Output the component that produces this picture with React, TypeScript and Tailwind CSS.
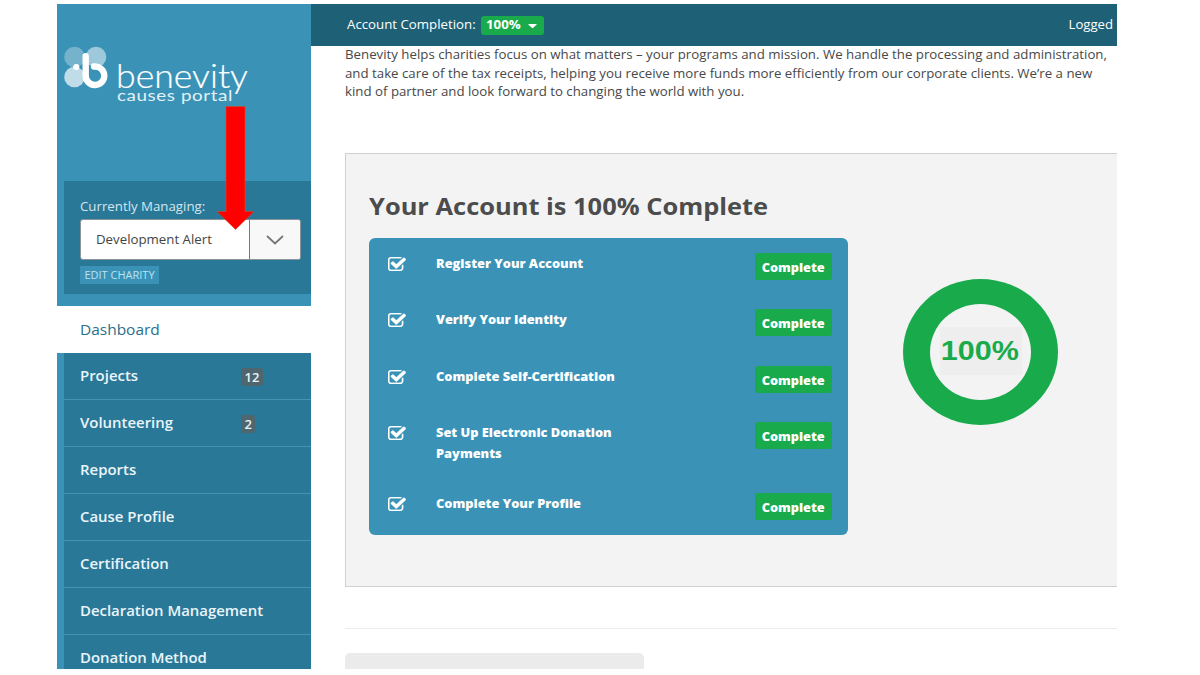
import React from "react";
import { FaCaretDown } from "react-icons/fa";

const navItems = [
  { name: "Projects", count: 12 },
  { name: "Volunteering", count: 2 },
  { name: "Reports" },
  { name: "Cause Profile" },
  { name: "Certification" },
  { name: "Declaration Management" },
  { name: "Donation Method" },
];

const steps = [
  "Register Your Account",
  "Verify Your Identity",
  "Complete Self-Certification",
  "Set Up Electronic Donation Payments",
  "Complete Your Profile",
];

function Logo() {
  return (
    <svg width="190" height="62" viewBox="0 0 190 62" fill="none">
      <circle cx="10.5" cy="13" r="10.3" fill="#fff" fillOpacity="0.3" />
      <circle cx="32" cy="13" r="10.3" fill="#fff" fillOpacity="0.5" />
      <circle cx="10.5" cy="33" r="10.3" fill="#fff" fillOpacity="0.68" />
      <circle cx="12.3" cy="23" r="3.1" fill="#fff" />
      <path
        d="M21.7 12.3V31.7A9.3 9.3 0 1 0 30 22.500"
        stroke="#fff"
        strokeWidth="6.4"
        strokeLinecap="round"
      />
      <text
        x="52"
        y="44"
        fill="#fff"
        stroke="#fff"
        strokeWidth="0.2"
        fontSize="34"
        textLength="132"
        lengthAdjust="spacingAndGlyphs"
        className="font-['Lato'] font-light"
      >
        benevity
      </text>
      <text
        x="53"
        y="57"
        fill="#e3f1f6"
        fontSize="16"
        letterSpacing="0.5"
        textLength="116"
        lengthAdjust="spacingAndGlyphs"
        className="font-['Lato']"
      >
        causes portal
      </text>
    </svg>
  );
}

function CheckIcon() {
  return (
    <svg
      className="mt-[5px] w-[18px] h-[14px] shrink-0"
      viewBox="64 128 1664 1408"
      preserveAspectRatio="none"
      fill="currentColor"
      stroke="currentColor"
      strokeWidth="30"
    >
      <path d="M1472 930v318q0 119-84.500 203.500t-203.500 84.500h-832q-119 0-203.500-84.500t-84.500-203.500v-832q0-119 84.500-203.500t203.500-84.500h832q63 0 117 25 15 7 18 23 3 17-9 29l-49 49q-10 10-23 10-3 0-9-2-23-6-45-6h-832q-66 0-113 47t-47 113v832q0 66 47 113t113 47h832q66 0 113-47t47-113v-254q0-13 9-22l64-64q10-10 23-10 6 0 12 3 20 8 20 29zm231-489l-814 814q-24 24-57 24t-57-24l-430-430q-24-24-24-57t24-57l110-110q24-24 57-24t57 24l263 263 647-647q24-24 57-24t57 24l110 110q24 24 24 57t-24 57z" />
    </svg>
  );
}

function Sidebar() {
  return (
    <aside className="w-[254px] shrink-0 bg-[#3a93b7] flex flex-col">
      <div className="h-[177px] shrink-0 pl-[7px] pt-[40px]">
        <Logo />
      </div>
      <div className="ml-[7px] h-[113px] shrink-0 bg-[#2a7898] pl-4 pt-[15px]">
        <p className="text-[13px] leading-5 text-[#d3e6ee] origin-left scale-x-[1.02]">
          Currently Managing:
        </p>
        <div className="mt-[3px] flex w-[221px] h-[41px] rounded-[3px] border border-[#8a9499] bg-white overflow-hidden">
          <div className="w-[169px] pl-[15px] leading-[38px] text-[13px] text-[#444] border-r border-[#777]">
            <span className="inline-block origin-left scale-x-[1.02]">
              Development Alert
            </span>
          </div>
          <div className="flex-1 bg-[#f8f8f8] flex items-center justify-center">
            <svg width="18" height="10" viewBox="0 0 18 10" fill="none">
              <path d="M1 1l8 7.500L17 1" stroke="#777" strokeWidth="1.8" />
            </svg>
          </div>
        </div>
        <button className="mt-[6px] block w-[79px] h-[18px] bg-[#3a93b7] text-[11px] leading-[18px] text-[#b9e2f2] whitespace-nowrap">
          EDIT CHARITY
        </button>
      </div>
      <div className="h-3 shrink-0" />
      <nav className="text-[15px] text-[#e9f5fa] font-semibold">
        <a className="block h-[47px] bg-white pl-[23px] leading-[46px] font-normal text-[#2a6f8b]">
          <span className="inline-block origin-left scale-x-[1.03]">
            Dashboard
          </span>
        </a>
        {navItems.map((item) => (
          <a
            key={item.name}
            className="ml-[7px] h-[47px] bg-[#2a7898] border-b border-[#4593b0] pl-4 pb-px flex items-center"
          >
            <span className="w-[161px] whitespace-nowrap">
              <span className="inline-block origin-left scale-x-[0.995]">
                {item.name}
              </span>
            </span>
            {item.count && (
              <span className="mt-[3px] rounded-[3px] bg-[#50666f] px-[3.5px] text-[13px] leading-[18px] font-semibold">
                {item.count}
              </span>
            )}
          </a>
        ))}
      </nav>
    </aside>
  );
}

function Header() {
  return (
    <header className="h-[42px] bg-[#1e6177] pl-9 pr-[4px] flex items-center text-[13px] text-white">
      <span className="w-[134px] whitespace-nowrap">
        <span className="inline-block origin-left scale-x-[1.02]">
          Account Completion:
        </span>
      </span>
      <span className="w-[63px] h-[19px] rounded-[3px] bg-[#19ab4b] pl-[5px] pr-[7px] flex items-center justify-between font-bold">
        <span className="origin-left scale-x-[1.02]">100%</span>
        <FaCaretDown className="w-[9px] h-[13px]" preserveAspectRatio="none" />
      </span>
      <span className="ml-auto origin-right scale-x-[1.01]">Logged</span>
    </header>
  );
}

function Steps() {
  return (
    <ul className="mt-[14px] w-[479px] h-[297px] rounded-[6px] bg-[#3a93b7] pt-[14px] text-white text-[13px] font-extrabold">
      {steps.map((step) => (
        <li
          key={step}
          className="flex items-start min-h-[27px] pl-[19px] pr-4 mb-[29.3px]"
        >
          <CheckIcon />
          <p className="ml-[30px] mt-px -mb-px w-[190px] leading-[21px] origin-left scale-x-[0.985]">
            {step}
          </p>
          <span className="ml-auto mt-px -mb-px w-[77px] h-[27px] rounded-[3px] bg-[#19ab4b] text-center leading-[28px]">
            <span className="inline-block scale-x-[0.98]">Complete</span>
          </span>
        </li>
      ))}
    </ul>
  );
}

function Ring() {
  return (
    <div className="ml-[55px] mt-[55px] w-[155px] h-[146px] rounded-[50%] bg-[#19ab4b] flex items-center justify-center">
      <div className="w-[101px] h-[96px] rounded-[50%] bg-[#f3f3f3] flex items-center justify-center">
        <div className="mb-[3px] w-[82px] h-[48px] bg-[#eeeeee] flex items-center justify-center font-['Liberation_Sans'] text-[28px] font-bold text-[#19ab4b]">
          <span className="-ml-px scale-x-[1.09]">100%</span>
        </div>
      </div>
    </div>
  );
}

function App() {
  return (
    <div className="w-[1200px] h-[675px] bg-white pl-[57px] pt-1 overflow-hidden font-['Open_Sans',sans-serif]">
      <div className="relative flex w-[1060px] h-[665px] overflow-hidden">
        <Sidebar />
        <main className="flex-1 min-w-0">
          <Header />
          <div className="pl-[34px]">
            <p className="-mt-px w-[740px] h-[108px] text-[13px] leading-[18.6px] text-[#484848] origin-left scale-x-[1.02] whitespace-nowrap">
              Benevity helps charities focus on what matters – your programs and
              mission. We handle the processing and administration,
              <br />
              and take care of the tax receipts, helping you receive more funds
              more efficiently from our corporate clients. We’re a new
              <br />
              kind of partner and look forward to changing the world with you.
            </p>
            <section className="h-[434px] border border-r-0 border-[#cfcfcf] bg-[#f3f3f3] pl-[23px] pt-[34px]">
              <h2 className="text-[24px] leading-[36px] font-bold text-[#4c4c4c] origin-left scale-x-[1.06]">
                Your Account is 100% Complete
              </h2>
              <div className="flex">
                <Steps />
                <Ring />
              </div>
            </section>
            <hr className="mt-[41px] border-[#ececec]" />
            <div className="mt-[24px] w-[299px] h-8 rounded-[5px] bg-[#ebebeb]" />
          </div>
        </main>
        <svg
          className="absolute left-[159px] top-[102px]"
          width="40"
          height="126"
          viewBox="0 0 40 126"
        >
          <path
            d="M10 .5h19v105h9L19.500 123.500 1 105.500h9z"
            fill="#f00"
            stroke="#c8502e"
            strokeWidth="0.6"
          />
        </svg>
      </div>
    </div>
  );
}

export default App;
